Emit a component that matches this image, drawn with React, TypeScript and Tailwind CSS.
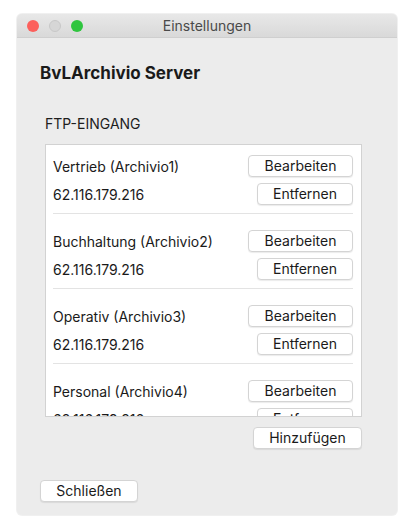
import React from "react";

const accounts = [
  { name: "Vertrieb (Archivio1)", ip: "62.116.179.216" },
  { name: "Buchhaltung (Archivio2)", ip: "62.116.179.216" },
  { name: "Operativ (Archivio3)", ip: "62.116.179.216" },
  { name: "Personal (Archivio4)", ip: "62.116.179.216" },
];

function MacButton({ label, className = "" }: { label: string; className?: string }) {
  return (
    <button
      type="button"
      className={`h-[22px] rounded-[4px] border border-[#d4d4d4] bg-white text-[14px] leading-none text-[#1a1a1a] shadow-[0_1px_1px_rgba(0,0,0,0.08)] ${className}`}
    >
      {label}
    </button>
  );
}

export default function App() {
  return (
    <div
      className="min-h-[529px] w-[420px] bg-white pl-[17px] pt-[14px]"
      style={{ fontFamily: "Inter, 'Noto Sans', sans-serif" }}
    >
      <div className="flex h-[501px] w-[380px] flex-col overflow-hidden rounded-[5px] bg-[#ececec] shadow-[0_0_0_1px_rgba(0,0,0,0.06)]">
        {/* title bar */}
        <div className="relative flex h-[24px] shrink-0 items-center justify-center border-b border-[#cfcfcf] bg-gradient-to-b from-[#e8e8e8] to-[#d9d9d9]">
          <div className="absolute left-[10px] top-[6px] flex gap-[10px]">
            <span className="h-[12px] w-[12px] rounded-full bg-[#fc605c]" />
            <span className="h-[12px] w-[12px] rounded-full border border-[#c8c8c8] bg-[#d6d6d6]" />
            <span className="h-[12px] w-[12px] rounded-full bg-[#2fc53f]" />
          </div>
          <span className="text-[14px] text-[#4a4a4a]">Einstellungen</span>
        </div>

        <div className="flex flex-1 flex-col pl-[23px] pr-[35px]">
          <h1 className="mt-[25px] text-[17px] font-bold leading-[20px] text-[#1a1a1a]">BvLArchivio Server</h1>

          <div className="ml-[5px] mt-[32px] flex flex-col">
            <div className="text-[14px] leading-[17px] text-[#1e1e1e]">FTP-EINGANG</div>

            <div className="mt-[12px] h-[273px] w-[317px] overflow-hidden border border-[#d2d2d2] bg-white pl-[7px] pr-[8px]">
              {accounts.map((a, i) => (
                <div
                  key={a.name}
                  className={`flex flex-col gap-[6px] border-b border-[#e3e3e3] pb-[8px] ${i === 0 ? "pt-[10px]" : "pt-[16px]"}`}
                >
                  <div className="flex items-center justify-between">
                    <span className="text-[14px] text-[#1a1a1a]">{a.name}</span>
                    <MacButton label="Bearbeiten" className="w-[105px]" />
                  </div>
                  <div className="flex items-center justify-between">
                    <span className="text-[14px] text-[#1a1a1a]">{a.ip}</span>
                    <MacButton label="Entfernen" className="w-[96px]" />
                  </div>
                </div>
              ))}
            </div>

            <div className="mt-[10px] flex w-[317px] justify-end">
              <MacButton label="Hinzufügen" className="w-[109px]" />
            </div>
          </div>

          <div className="mt-[29px]">
            <MacButton label="Schließen" className="w-[98px]" />
          </div>
        </div>
      </div>
    </div>
  );
}
